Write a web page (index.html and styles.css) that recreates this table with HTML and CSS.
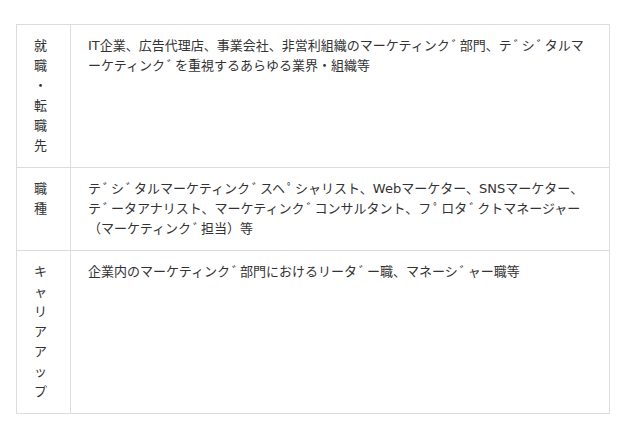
FILE: index.html
```html
<!DOCTYPE html>
<html lang="ja">
<head>
<meta charset="utf-8">
<link rel="stylesheet" href="styles.css">
</head>
<body>
<div class="page">
<table class="career">
<colgroup><col class="c-head"><col class="c-body"></colgroup>
<tbody>
<tr>
<th>就職・転職先</th>
<td>IT企業、広告代理店、事業会社、非営利組織のマーケティンク<span class="dk">ﾞ</span>部門、テ<span class="dk">ﾞ</span>シ<span class="dk">ﾞ</span>タルマーケティンク<span class="dk">ﾞ</span>を重視するあらゆる業界・組織等</td>
</tr>
<tr>
<th>職種</th>
<td>テ<span class="dk">ﾞ</span>シ<span class="dk">ﾞ</span>タルマーケティンク<span class="dk">ﾞ</span>スヘ<span class="dk">ﾟ</span>シャリスト、Webマーケター、SNSマーケター、テ<span class="dk">ﾞ</span>ータアナリスト、マーケティンク<span class="dk">ﾞ</span>コンサルタント、フ<span class="dk">ﾟ</span>ロタ<span class="dk">ﾞ</span>クトマネージャー（マーケティンク<span class="dk">ﾞ</span>担当）等</td>
</tr>
<tr>
<th>キャリアアップ</th>
<td>企業内のマーケティンク<span class="dk">ﾞ</span>部門におけるリータ<span class="dk">ﾞ</span>ー職、マネーシ<span class="dk">ﾞ</span>ャー職等</td>
</tr>
</tbody>
</table>
</div>
</body>
</html>
```
FILE: styles.css
```css
html, body {
  margin: 0;
  padding: 0;
  background: #fff;
}
.page {
  padding: 24px 0 0 16px;
}
.career {
  width: 594px;
  border-collapse: collapse;
  table-layout: fixed;
  font-family: "DejaVu Sans", "Noto Sans CJK JP", sans-serif;
  font-size: 13px;
  line-height: 20px;
  color: #333;
}
.c-head { width: 54px; }
.career th,
.career td {
  border: 1px solid #dcdcdc;
  padding: 11px 16px 11px 17px;
  text-align: left;
  vertical-align: top;
  font-weight: normal;
}
.career th {
  word-break: break-all;
  line-break: anywhere;
}
.dk {
  font-family: "Noto Sans CJK JP", sans-serif;
  line-height: 0;
  padding: 0 1.5px 0 2px;
}
```
